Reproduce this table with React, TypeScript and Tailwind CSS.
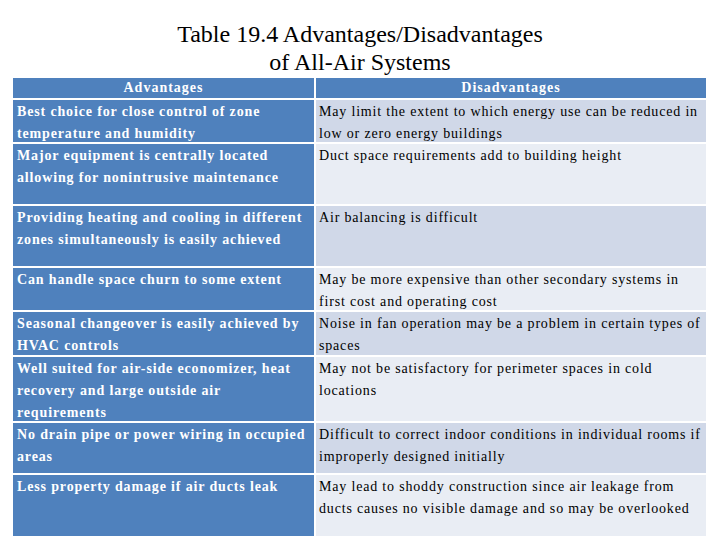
const rows: [string, string][] = [
  [
    "Best choice for close control of zone temperature and humidity",
    "May limit the extent to which energy use can be reduced in low or zero energy buildings",
  ],
  [
    "Major equipment is centrally located allowing for nonintrusive maintenance",
    "Duct space requirements add to building height",
  ],
  [
    "Providing heating and cooling in different zones simultaneously is easily achieved",
    "Air balancing is difficult",
  ],
  [
    "Can handle space churn to some extent",
    "May be more expensive than other secondary systems in first cost and operating cost",
  ],
  [
    "Seasonal changeover is easily achieved by HVAC controls",
    "Noise in fan operation may be a problem in certain types of spaces",
  ],
  [
    "Well suited for air-side economizer, heat recovery and large outside air requirements",
    "May not be satisfactory for perimeter spaces in cold locations",
  ],
  [
    "No drain pipe or power wiring in occupied areas",
    "Difficult to correct indoor conditions in individual rooms if improperly designed initially",
  ],
  [
    "Less property damage if air ducts leak",
    "May lead to shoddy construction since air leakage from ducts causes no visible damage and so may be overlooked",
  ],
];

export default function App() {
  return (
    <div className="w-[720px] h-[540px] bg-white overflow-hidden font-['Liberation_Serif','Times_New_Roman',serif]">
      <div className="pt-[20px] mb-[2px] text-center text-[24px] leading-[28px] text-black">
        <div>Table 19.4 Advantages/Disadvantages</div>
        <div>of All-Air Systems</div>
      </div>
      <div className="ml-[13px] grid grid-cols-[301px_390px] grid-rows-[20px_42px_60px_60px_42px_43px_64px_50px_61px] gap-[2px] text-[14px] leading-[22px]">
        <div className="bg-[#4f81bd] text-white font-bold text-center leading-[20px] tracking-[1px]">
          Advantages
        </div>
        <div className="bg-[#4f81bd] text-white font-bold text-center leading-[20px] tracking-[1px]">
          Disadvantages
        </div>
        {rows.map(([adv, dis], i) => (
          <>
            <div key={`a${i}`} className="bg-[#4f81bd] text-white font-bold pl-[4px] pt-[1px] tracking-[0.85px]">
              {adv}
            </div>
            <div
              key={`d${i}`}
              className={`${i % 2 === 0 ? "bg-[#d0d8e8]" : "bg-[#e9edf4]"} text-black pl-[3px] pt-[1px] tracking-[0.82px]`}
            >
              {dis}
            </div>
          </>
        ))}
      </div>
    </div>
  );
}
